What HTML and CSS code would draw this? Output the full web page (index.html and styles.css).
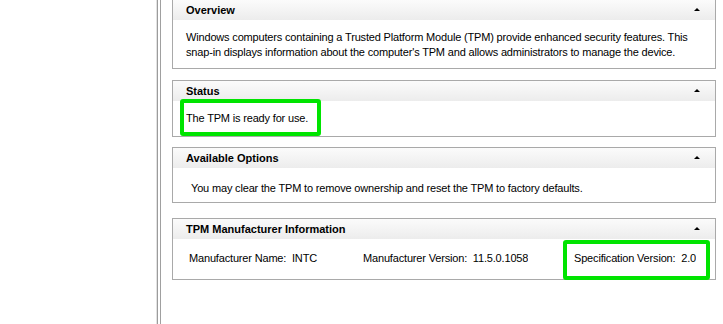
FILE: index.html
```html
<!DOCTYPE html>
<html>
<head>
  <meta charset="utf-8">
  <title>Trusted Platform Module (TPM) Management</title>
  <link rel="stylesheet" href="styles.css">
</head>
<body>
  <div class="window">
    <div class="nav"></div>
    <div class="splitter"></div>

    <div class="content">
      <div class="panel overview">
        <div class="head"><span>Overview</span><i class="caret"></i></div>
        <div class="body">
          <p>Windows computers containing a Trusted Platform Module (TPM) provide enhanced security features. This<br>
          snap-in displays information about the computer's TPM and allows administrators to manage the device.</p>
        </div>
      </div>

      <div class="panel status">
        <div class="head"><span>Status</span><i class="caret"></i></div>
        <div class="body">
          <p>The TPM is ready for use.</p>
        </div>
        <div class="mark mark-status"></div>
      </div>

      <div class="panel options">
        <div class="head"><span>Available Options</span><i class="caret"></i></div>
        <div class="body">
          <p>You may clear the TPM to remove ownership and reset the TPM to factory defaults.</p>
        </div>
      </div>

      <div class="panel maker">
        <div class="head"><span>TPM Manufacturer Information</span><i class="caret"></i></div>
        <div class="body row">
          <span class="field f-name">Manufacturer Name:&nbsp; INTC</span>
          <span class="field f-version">Manufacturer Version:&nbsp; 11.5.0.1058</span>
          <span class="field f-spec">Specification Version:&nbsp; 2.0</span>
        </div>
        <div class="mark mark-spec"></div>
      </div>
    </div>
  </div>
</body>
</html>
```

FILE: styles.css
```css
html, body {
  margin: 0;
  padding: 0;
}

* {
  box-sizing: border-box;
}

body {
  background: #fff;
  color: #000;
  font-family: "Liberation Sans", Arial, sans-serif;
  font-size: 11px;
  line-height: 15px;
  overflow: hidden;
}

.window {
  display: flex;
  height: 324px;
}

.nav {
  width: 156px;
  background: #fff;
}

.splitter {
  width: 5px;
  border-left: 1px solid #e2e2e2;
  border-right: 1px solid #a0a0a0;
  box-shadow: inset 1px 0 0 #9c9c9c;
}

.content {
  flex: 1;
  padding: 0 7px 0 11px;
  margin-top: -1px;
}

.panel {
  position: relative;
  border: 1px solid #a9a9a9;
  background: #fff;
  margin-bottom: 11px;
}

.panel p {
  margin: 0;
  white-space: nowrap;
}

.head {
  display: flex;
  align-items: center;
  height: 20px;
  padding: 0 15px 0 13px;
  font-weight: bold;
  background: linear-gradient(#fbfbfb, #f3f3f3 55%, #ececec);
}

.caret {
  margin-left: auto;
  width: 0;
  height: 0;
  border-left: 3px solid transparent;
  border-right: 3px solid transparent;
  border-bottom: 3px solid #000;
  margin-top: -2px;
}

.body {
  padding: 10px 13px 8px 13px;
  letter-spacing: -0.17px;
}

.status {
  margin-bottom: 10px;
}

.status .body {
  padding: 10px 13px 10px 13px;
}

.options {
  margin-bottom: 15px;
}

.options .body {
  padding: 13px 18px 6px 18px;
}

.row {
  display: flex;
  padding: 12px 0 13px 16px;
  white-space: nowrap;
}

.field {
  overflow: hidden;
}

.f-name {
  width: 174px;
}

.f-version {
  width: 165px;
}

.f-spec {
  margin-left: 46px;
}

.mark {
  position: absolute;
  border: 4px solid #00e400;
  border-radius: 3px;
}

.mark-status {
  left: 7px;
  top: 18px;
  width: 141px;
  height: 37px;
}

.mark-spec {
  left: 390px;
  top: 21px;
  width: 147px;
  height: 40px;
}
```
